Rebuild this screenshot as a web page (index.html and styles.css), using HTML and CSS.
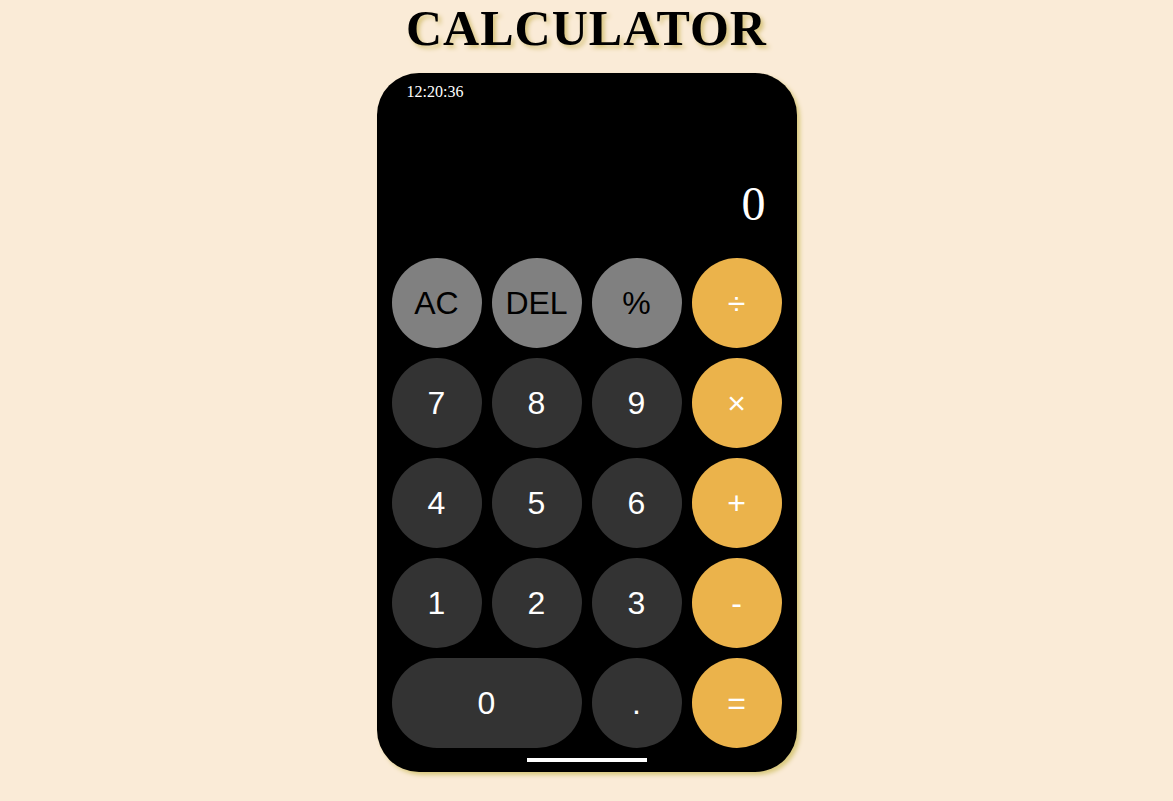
FILE: index.html
```html
<!DOCTYPE html>
<html lang="en">
<head>
<meta charset="utf-8">
<title>Calculator</title>
<link rel="stylesheet" href="styles.css">
</head>
<body>
<h1 class="title">CALCULATOR</h1>
<div class="phone">
  <div class="time">12:20:36</div>
  <div class="display">0</div>
  <div class="keypad">
    <button class="key key-fn">AC</button>
    <button class="key key-fn">DEL</button>
    <button class="key key-fn">%</button>
    <button class="key key-op">÷</button>
    <button class="key key-num">7</button>
    <button class="key key-num">8</button>
    <button class="key key-num">9</button>
    <button class="key key-op">×</button>
    <button class="key key-num">4</button>
    <button class="key key-num">5</button>
    <button class="key key-num">6</button>
    <button class="key key-op">+</button>
    <button class="key key-num">1</button>
    <button class="key key-num">2</button>
    <button class="key key-num">3</button>
    <button class="key key-op">-</button>
    <button class="key key-num key-wide">0</button>
    <button class="key key-num">.</button>
    <button class="key key-op">=</button>
  </div>
  <div class="home-bar"></div>
</div>
</body>
</html>
```
FILE: styles.css
```css
html, body {
  margin: 0;
  padding: 0;
}
body {
  background: #faebd7;
  font-family: "Liberation Serif", "Times New Roman", serif;
  display: flex;
  flex-direction: column;
  align-items: center;
  min-height: 801px;
}
.title {
  margin: 0;
  font-size: 50px;
  line-height: 56px;
  letter-spacing: 1px;
  font-weight: bold;
  color: #000;
  text-shadow: 3px 3px 4px #d8c57f;
}
.phone {
  margin-top: 17px;
  width: 420px;
  box-sizing: border-box;
  padding: 10px 15px 10px;
  background: #000;
  border-radius: 42px;
  box-shadow: 3px 3px 4px #d9c97e;
  display: flex;
  flex-direction: column;
}
.time {
  color: #fff;
  font-size: 16px;
  line-height: 18px;
  padding-left: 15px;
}
.display {
  margin-top: 75px;
  color: #fff;
  font-size: 48px;
  line-height: 56px;
  text-align: right;
  padding-right: 16px;
}
.keypad {
  margin-top: 26px;
  display: grid;
  grid-template-columns: repeat(4, 90px);
  grid-auto-rows: 90px;
  gap: 10px;
}
.key {
  border: none;
  border-radius: 45px;
  padding: 0;
  margin: 0;
  font-family: "Liberation Sans", Arial, sans-serif;
  font-size: 32px;
  display: flex;
  align-items: center;
  justify-content: center;
  cursor: pointer;
}
.key-fn {
  background: #808080;
  color: #000;
}
.key-num {
  background: #333333;
  color: #fff;
}
.key-op {
  background: #ebb34b;
  color: #fff;
}
.key-wide {
  grid-column: span 2;
}
.home-bar {
  margin: 10px auto 0;
  width: 120px;
  height: 4px;
  background: #fff;
}
```
